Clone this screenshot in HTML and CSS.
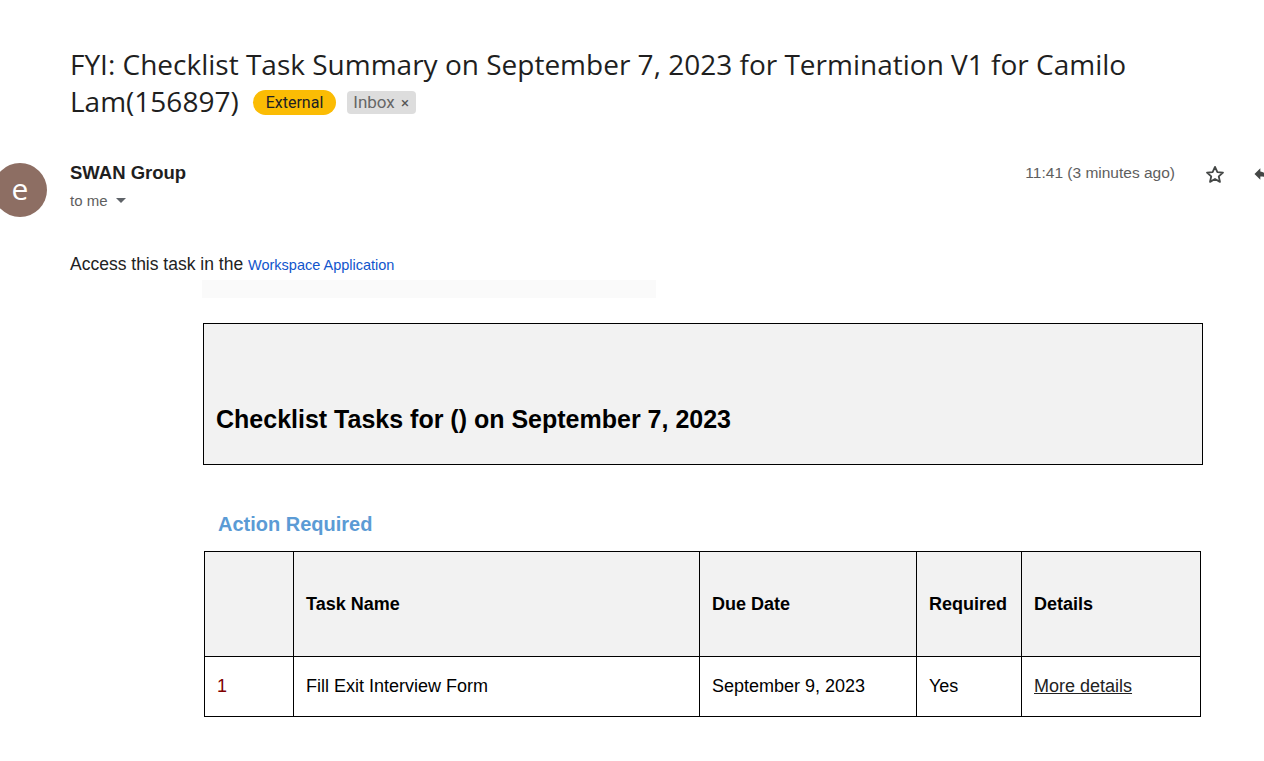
FILE: index.html
```html
<!DOCTYPE html>
<html>
<head>
<meta charset="utf-8">
<link rel="stylesheet" href="styles.css">
</head>
<body>
<div class="page">
  <div class="subject"><h1 class="stitle">FYI: Checklist Task Summary on September 7, 2023 for Termination V1 for Camilo Lam(156897)</h1><span class="badge ext">External</span><span class="badge inbox">Inbox <span class="x">×</span></span></div>

  <div class="msghead">
    <div class="avatar">e</div>
    <div class="sender">
      <div class="name">SWAN Group</div>
      <div class="tome">to me <svg class="caret" width="10" height="6" viewBox="0 0 10 6"><path d="M0 0 L10 0 L5 5 Z" fill="#5f6368"/></svg></div>
    </div>
    <div class="meta">
      <span class="time">11:41 (3 minutes ago)</span>
      <svg class="star" width="22" height="22" viewBox="0 0 24 24"><path d="M12 3.2l2.6 5.6 6.1.6-4.6 4.1 1.3 6-5.4-3.1-5.4 3.1 1.3-6-4.6-4.1 6.1-.6z" fill="none" stroke="#444746" stroke-width="2" stroke-linejoin="round"/></svg>
      <svg class="reply" width="20" height="20" viewBox="0 0 24 24"><path d="M10 9V5l-7 7 7 7v-4.1c5 0 8.5 1.6 11 5.1-1-5-4-10-11-11z" fill="#444746"/></svg>
    </div>
  </div>

  <div class="body">
    <p class="access">Access this task in the <a href="#">Workspace Application</a></p>
    <div class="inner">
      <div class="strip"></div>
      <div class="hbox"><h2>Checklist Tasks for () on September 7, 2023</h2></div>
      <h3 class="section">Action Required</h3>
      <table class="tasks">
        <colgroup>
          <col class="c1"><col class="c2"><col class="c3"><col class="c4"><col class="c5">
        </colgroup>
        <tr class="hrow">
          <th></th><th>Task Name</th><th>Due Date</th><th>Required</th><th>Details</th>
        </tr>
        <tr class="brow">
          <td class="num">1</td><td>Fill Exit Interview Form</td><td>September 9, 2023</td><td>Yes</td><td><a href="#" class="more">More details</a></td>
        </tr>
      </table>
    </div>
  </div>
</div>
</body>
</html>
```

FILE: styles.css
```css
html, body { margin: 0; padding: 0; background: #fff; }
body { overflow: hidden; width: 1264px; height: 761px; }
.page { position: relative; }

.subject {
  padding: 46px 100px 0 70px;
  font-family: "Open Sans", Roboto, sans-serif;
  font-size: 28px;
  line-height: 37px;
  color: #1f1f1f;
}
.stitle {
  display: inline;
  margin: 0;
  font-weight: 400;
  font-size: 28px;
}
.badge {
  display: inline-block;
  vertical-align: 4px;
  font-family: Roboto, "Open Sans", sans-serif;
  font-size: 16px;
  line-height: 22px;
}
.ext {
  margin-left: 14px;
  background: #fbbc04;
  color: #202124;
  border-radius: 13px;
  padding: 2px 13px 1px 13px;
}
.inbox {
  margin-left: 11px;
  background: #dddddd;
  color: #666;
  border-radius: 4px;
  padding: 0 7px 0 6px;
  font-size: 17px;
}
.inbox .x { font-size: 15px; color: #555; margin-left: 2px; }

.msghead {
  display: flex;
  align-items: flex-start;
  margin-top: 43px;
  height: 70px;
}
.avatar {
  width: 54px; height: 54px;
  border-radius: 50%;
  background: #8d6e63;
  color: #fff;
  font-family: "Open Sans", Roboto, sans-serif;
  font-size: 30px;
  line-height: 52px;
  text-align: center;
  margin-left: -7px;
  flex: none;
}
.sender { margin-left: 23px; margin-top: -1px; }
.name {
  font-family: Arial, "Liberation Sans", sans-serif;
  font-weight: 700;
  font-size: 18.5px;
  line-height: 22px;
  color: #1f1f1f;
}
.tome {
  font-family: Arial, "Liberation Sans", sans-serif;
  font-size: 15px;
  line-height: 20px;
  color: #5e5e5e;
  margin-top: 7px;
}
.caret { margin-left: 4px; vertical-align: 2px; }
.meta {
  margin-left: auto;
  display: flex;
  align-items: center;
  margin-top: -3px;
}
.time {
  font-family: Arial, "Liberation Sans", sans-serif;
  font-size: 15.5px;
  color: #5e5e5e;
  line-height: 22px;
}
.star { margin-left: 29px; margin-top: 4px; }
.reply { margin-left: 26px; margin-right: -8px; margin-top: 2px; }

.body { padding-left: 70px; font-family: Arial, "Liberation Sans", sans-serif; }
.access {
  margin: 0;
  font-size: 17.5px;
  line-height: 20px;
  color: #222;
  margin-top: 21px;
}
.access a { color: #1155cc; text-decoration: none; font-size: 14.5px; }
.inner { margin-left: 133px; }
.strip {
  width: 454px;
  height: 18px;
  background: #fafafa;
  margin-top: 5px;
  margin-left: -1px;
}
.hbox {
  margin-top: 25px;
  width: 998px;
  border: 1px solid #000;
  background: #f2f2f2;
  padding: 81px 0 31px 0;
}
.hbox h2 {
  margin: 0 0 0 12px;
  font-size: 25px;
  line-height: 28px;
  font-weight: 700;
  color: #000;
}
.section {
  margin: 47px 0 0 15px;
  font-size: 20px;
  line-height: 24px;
  font-weight: 700;
  color: #5b9bd5;
}
.tasks {
  margin-top: 15px;
  margin-left: 1px;
  border-collapse: collapse;
  width: 996px;
  table-layout: fixed;
  font-size: 18px;
  color: #000;
}
.c1 { width: 89px; }
.c2 { width: 406px; }
.c3 { width: 217px; }
.c4 { width: 105px; }
.c5 { width: 179px; }
.tasks th, .tasks td {
  border: 1px solid #000;
  text-align: left;
  padding: 0 0 0 12px;
  vertical-align: middle;
}
.hrow { height: 105px; }
.hrow th { background: #f2f2f2; font-weight: 700; }
.brow { height: 60px; }
.num { color: #800000; }
.more { color: #222; text-decoration: underline; }
```
